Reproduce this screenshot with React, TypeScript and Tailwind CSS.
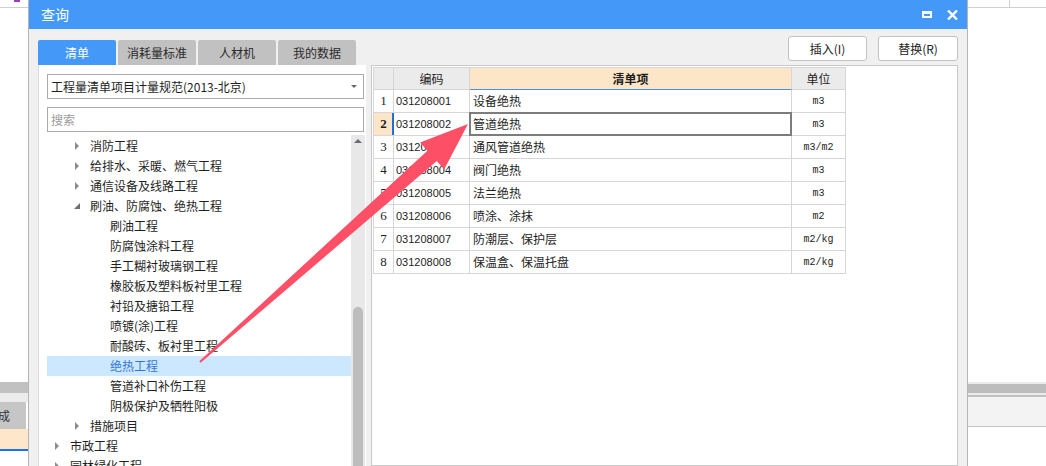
import { ReactNode } from 'react';

type TreeItem = { label: string; level: 1 | 2 | 3; arrow?: 'right' | 'down'; selected?: boolean };

const tree: TreeItem[] = [
  { label: '消防工程', level: 2, arrow: 'right' },
  { label: '给排水、采暖、燃气工程', level: 2, arrow: 'right' },
  { label: '通信设备及线路工程', level: 2, arrow: 'right' },
  { label: '刷油、防腐蚀、绝热工程', level: 2, arrow: 'down' },
  { label: '刷油工程', level: 3 },
  { label: '防腐蚀涂料工程', level: 3 },
  { label: '手工糊衬玻璃钢工程', level: 3 },
  { label: '橡胶板及塑料板衬里工程', level: 3 },
  { label: '衬铅及搪铅工程', level: 3 },
  { label: '喷镀(涂)工程', level: 3 },
  { label: '耐酸砖、板衬里工程', level: 3 },
  { label: '绝热工程', level: 3, selected: true },
  { label: '管道补口补伤工程', level: 3 },
  { label: '阴极保护及牺牲阳极', level: 3 },
  { label: '措施项目', level: 2, arrow: 'right' },
  { label: '市政工程', level: 1, arrow: 'right' },
  { label: '园林绿化工程', level: 1, arrow: 'right' },
];

const indent = { 1: 'pl-[8px]', 2: 'pl-[28px]', 3: 'pl-[63px]' };

const rows = [
  ['031208001', '设备绝热', 'm3'],
  ['031208002', '管道绝热', 'm3'],
  ['031208003', '通风管道绝热', 'm3/m2'],
  ['031208004', '阀门绝热', 'm3'],
  ['031208005', '法兰绝热', 'm3'],
  ['031208006', '喷涂、涂抹', 'm2'],
  ['031208007', '防潮层、保护层', 'm2/kg'],
  ['031208008', '保温盒、保温托盘', 'm2/kg'],
];

const tabs = ['清单', '消耗量标准', '人材机', '我的数据'];

function Cell({ className = '', children }: { className?: string; children?: ReactNode }) {
  return <div className={`relative flex items-center border-b border-r border-[#d6d6d6] ${className}`}>{children}</div>;
}

function TreeRow({ item }: { item: TreeItem }) {
  return (
    <div
      className={`flex h-[20px] items-center text-[12px] ${indent[item.level]} ${
        item.selected ? 'bg-[#cce8ff] text-[#3477d6]' : 'text-[#1e1e1e]'
      }`}
    >
      {item.arrow && (
        <span className="flex w-[15px] items-center">
          {item.arrow === 'right' ? (
            <span className="h-0 w-0 border-y-[4px] border-l-[4px] border-y-transparent border-l-[#8c8c8c]" />
          ) : (
            <svg width="6" height="6" viewBox="0 0 6 6" className="-ml-px">
              <polygon points="6,0 6,6 0,6" fill="#6e6e6e" />
            </svg>
          )}
        </span>
      )}
      <span className="whitespace-nowrap">{item.label}</span>
    </div>
  );
}

function LeftStrip() {
  return (
    <div className="flex w-[28px] shrink-0 flex-col">
      <div className="h-[8px] border-b border-[#cfcfcf]">
        <div className="ml-[14px] h-[2px] w-[6px] bg-[#a03cc4]" />
      </div>
      <div className="h-[374px]" />
      <div className="h-[11px] bg-[#c1c1c1]" />
      <div className="h-[9px] bg-[#ececec]" />
      <div className="flex h-[27px] bg-white">
        <div className="flex w-[26px] items-center overflow-hidden bg-[#c6c6c6] text-[12px] text-[#333]">
          <span className="-ml-[2px]">成</span>
        </div>
      </div>
      <div className="h-[20px] bg-[#fde6c9]" />
      <div className="h-[2px] bg-[#1b74e4]" />
    </div>
  );
}

function RightStrip() {
  return (
    <div className="flex w-[78px] shrink-0 flex-col">
      <div className="h-[8px] border-b border-[#cfcfcf]">
        <div className="h-full w-[42px] border-r border-[#cfcfcf]" />
      </div>
      <div className="h-[374px]" />
      <div className="h-[2px] bg-[#ebebeb]" />
      <div className="h-[9px] bg-[#bdbdbd]" />
      <div className="h-[2px] bg-[#ebebeb]" />
      <div className="h-[2px] bg-[#c0c0c0]" />
      <div className="h-[30px] border-b border-[#c4c4c4] bg-[#f3f3f3]" />
    </div>
  );
}

function Dialog() {
  return (
    <div className="flex w-[940px] shrink-0 flex-col border-x border-[#b5b5b5] bg-[#f0f0f0]">
      {/* Title bar */}
      <div className="flex h-[29px] shrink-0 items-center bg-[#4499f8] pl-[12px] pr-[9px] text-[14px] text-white">
        <span>查询</span>
        <div className="ml-auto flex items-center gap-[15px]">
          <div className="h-[7px] w-[10px] border-2 border-t-[3px] border-white" />
          <svg width="11" height="10" viewBox="0 0 11 10">
            <path d="M1 0.5 L10 9.5 M10 0.5 L1 9.5" stroke="white" strokeWidth="2.4" />
          </svg>
        </div>
      </div>

      {/* Tabs + buttons */}
      <div className="flex h-[36px] shrink-0 px-[9px]">
        <div className="flex gap-[2px] self-end">
          {tabs.map((t, i) => (
            <div
              key={t}
              className={`flex h-[25px] w-[78px] items-center justify-center rounded-t-[2px] text-[12px] ${
                i === 0 ? 'bg-[#4499f8] text-white' : 'bg-[#c1c1c1] text-[#2a2a2a]'
              }`}
            >
              {t}
            </div>
          ))}
        </div>
        <div className="ml-auto flex gap-[11px] pt-[7px]">
          <button className="h-[25px] w-[79px] rounded-[3px] border border-[#c2c2c2] bg-white text-[12px] text-[#222]">插入(I)</button>
          <button className="h-[25px] w-[80px] rounded-[3px] border border-[#c2c2c2] bg-white text-[12px] text-[#222]">替换(R)</button>
        </div>
      </div>

      {/* Content */}
      <div className="flex min-h-0 flex-1 gap-[5px] px-[9px]">
        {/* Left tree panel */}
        <div className="flex w-[328px] shrink-0 flex-col border-l border-[#dcdcdc] bg-white pl-[8px] pt-[9px]">
          <div className="flex h-[25px] w-[317px] items-center border border-[#ababab] pl-[3px] pr-[6px] text-[12px] text-[#1e1e1e]">
            <span>工程量清单项目计量规范(2013-北京)</span>
            <span className="ml-auto h-0 w-0 border-x-[3px] border-t-[3px] border-x-transparent border-t-[#6a6a6a]" />
          </div>
          <div className="mt-[8px] flex h-[25px] w-[317px] items-center border border-[#ababab] pl-[3px] text-[12px] text-[#9c9c9c]">
            搜索
          </div>
          <div className="mt-[3px] flex min-h-0 flex-1">
            <div className="w-[304px] overflow-hidden pt-[1px]">
              {tree.map((item) => (
                <TreeRow key={item.label} item={item} />
              ))}
            </div>
            <div className="flex w-[14px] flex-col bg-[#e8e8e8]">
              <span className="mx-auto mt-[4px] h-0 w-0 border-x-[4px] border-b-[4px] border-x-transparent border-b-[#6b6b78]" />
              <div className="mx-auto mt-[164px] w-[10px] flex-1 rounded-t-[5px] bg-[#bdbdbd]" />
            </div>
          </div>
        </div>

        {/* Right grid panel */}
        <div className="flex-1 border border-[#c9c9c9] bg-white p-px">
          <div className="grid w-max grid-cols-[20px_76px_322px_54px] border-l border-t border-[#d6d6d6] text-[#1e1e1e]">
            <Cell className="h-[22px] bg-[#ebebeb]" />
            <Cell className="h-[22px] justify-center bg-[#ebebeb] text-[12px]">编码</Cell>
            <Cell className="h-[22px] justify-center border-b-[#4a8fe0] bg-[#fde6c8] text-[12px] font-bold">清单项</Cell>
            <Cell className="h-[22px] justify-center bg-[#ebebeb] text-[12px]">单位</Cell>
            {rows.map(([code, name, unit], i) => {
              const sel = i === 1;
              return [
                <Cell
                  key={`n${i}`}
                  className={`h-[23px] justify-center font-['Liberation_Serif',serif] text-[13px] ${sel ? 'bg-[#fde6c8] font-bold' : ''}`}
                >
                  {i + 1}
                </Cell>,
                <Cell key={`c${i}`} className="h-[23px] pl-[2px] font-['Liberation_Sans',sans-serif] text-[11px]">
                  {sel && <span className="absolute -left-[2px] top-0 bottom-0 w-[2px] bg-[#1f6fe0]" />}
                  {code}
                </Cell>,
                <Cell key={`q${i}`} className="h-[23px] pl-[3px] text-[12px]">
                  {sel && <span className="absolute -left-px -top-px right-[-1px] bottom-[-1px] border-2 border-[#7c7c7c]" />}
                  {name}
                </Cell>,
                <Cell key={`u${i}`} className="h-[23px] justify-center font-['Liberation_Mono',monospace] text-[10px]">
                  {unit}
                </Cell>,
              ];
            })}
          </div>
        </div>
      </div>
    </div>
  );
}

export default function App() {
  return (
    <div className="relative flex h-[466px] w-[1046px] overflow-hidden bg-white font-['Noto_Sans_CJK_SC',sans-serif]">
      <LeftStrip />
      <Dialog />
      <RightStrip />
      {/* annotation arrow */}
      <svg className="pointer-events-none absolute left-0 top-0" width="1046" height="466">
        <polygon
          points="199.3,361.3 427.4,150.7 420.1,142.4 468,124 444.1,169.4 436.8,161.1 200.7,362.7"
          fill="#fd4f66"
        />
      </svg>
    </div>
  );
}
